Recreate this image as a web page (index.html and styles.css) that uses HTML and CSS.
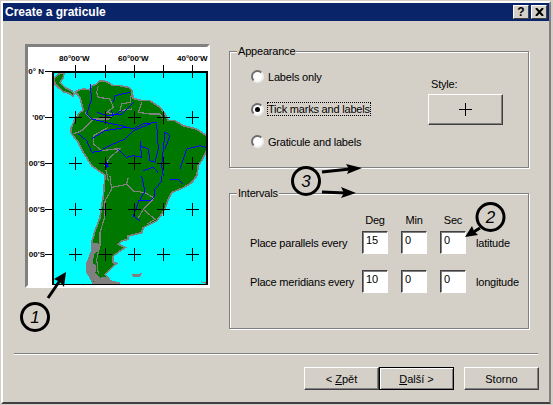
FILE: index.html
```html
<!DOCTYPE html>
<html lang="en">
<head>
    <meta charset="UTF-8">
    <title>Create a graticule</title>
    <link rel="stylesheet" href="styles.css">
</head>
<body>
<div class="window">
    <div class="titlebar">
        <span class="title">Create a graticule</span>
        <button class="caption-btn help-btn">?</button>
        <button class="caption-btn close-btn">
            <svg width="9" height="8" viewBox="0 0 9 8"><path d="M1 0L8 8M8 0L1 8" stroke="#000" stroke-width="2" fill="none"/></svg>
        </button>
    </div>

    <div class="dialog-body">
        <div class="preview">
            <svg class="map" width="180" height="238" viewBox="28 46 180 238">
                <defs>
                    <clipPath id="plotClip"><rect x="53" y="71" width="153" height="212"/></clipPath>
                </defs>

                <g class="labels">
                    <text x="59" y="60">80°00'W</text>
                    <text x="118" y="60">60°00'W</text>
                    <text x="177" y="60">40°00'W</text>
                    <text x="44" y="73" text-anchor="end">0° N</text>
                    <text x="45" y="119" text-anchor="end">'00'</text>
                    <text x="45" y="165" text-anchor="end">00'S</text>
                    <text x="45" y="211" text-anchor="end">00'S</text>
                    <text x="45" y="256" text-anchor="end">00'S</text>
                </g>

                <rect x="53" y="71" width="153" height="212" fill="#00ffff"/>

                <!-- traced from the picture at 3x, so scale back down -->
                <g clip-path="url(#plotClip)">
                    <g transform="translate(50 68) scale(0.3333)" fill="none" shape-rendering="crispEdges">
                        <path class="land" d="M12,28 L25,15 42,12 40,25 30,40 45,55 65,65 72,75 70,82 55,72 40,68 25,55 15,45 Z"/>
                        <path class="land" d="M75,68 L90,62 100,60 118,62 125,50 140,45 150,35 170,38 190,50 210,50 235,55 245,62 250,88 275,95 300,95 330,115 345,135 355,155 375,155 400,170 440,180 470,200 480,205 480,240 470,245 455,275 445,290 440,321 425,341 400,356 365,371 355,391 345,421 320,456 300,466 280,476 275,491 235,501 235,511 215,516 205,526 225,536 210,546 190,561 190,581 200,583 180,601 165,616 175,626 180,636 210,643 130,643 112,611 110,586 125,546 125,521 135,486 150,446 160,381 165,321 160,315 125,290 100,250 85,220 65,195 62,180 75,150 90,130 100,125 90,85 Z"/>
                        <path class="ice" d="M122,521 L148,524 145,546 132,556 128,583 140,590 136,611 150,626 170,624 185,641 135,643 115,615 110,586 122,550 Z"/>
                        <path class="ice" d="M245,616 L275,613 270,623 250,623 Z"/>
                        <path class="ice" d="M452,637 L470,641 470,644 460,643 Z"/>

                        <path class="border" d="M145,50 L140,70 145,85 180,90 190,115 170,130 190,135 175,150 130,150 95,185 70,195"/>
                        <path class="border" d="M245,70 L240,100 215,105 210,125 245,120"/>
                        <path class="border" d="M275,100 L265,130 300,135 330,135 340,150"/>
                        <path class="border" d="M105,130 L125,150"/>
                        <path class="border" d="M175,175 L130,200 130,225 155,245 195,240 210,240 180,265 165,290 175,335"/>
                        <path class="border" d="M180,321 L185,361 165,396 165,441 150,491 150,531 140,571 145,616"/>
                        <path class="border" d="M185,355 L230,346 250,366 285,371 310,386 305,396 280,421 315,451 290,466"/>
                        <path class="border" d="M235,326 L230,346"/>
                        <path class="border" d="M280,421 L265,446"/>

                        <path class="river" d="M190,100 L195,80 240,70"/>
                        <path class="river" d="M120,45 L125,90 110,135 125,150 165,160 215,170 250,180 280,165 320,160"/>
                        <path class="river" d="M85,195 L110,215 125,250 155,245"/>
                        <path class="river" d="M125,210 L165,185 230,175"/>
                        <path class="river" d="M160,240 L190,225 225,210 250,185 300,165"/>
                        <path class="river" d="M205,240 L230,265 250,260 275,265 270,215"/>
                        <path class="river" d="M270,230 L295,240 300,275 315,280 325,240 320,165"/>
                        <path class="river" d="M345,240 L360,200 345,190 335,290 340,321"/>
                        <path class="river" d="M390,300 L410,240 450,230 468,235"/>
                        <path class="river" d="M140,130 L170,140 215,135 250,100"/>
                        <path class="river" d="M185,125 L190,140 215,125"/>
                        <path class="river" d="M280,305 L310,295 325,312"/>
                        <path class="river" d="M275,321 L285,366 265,401 250,441 270,456"/>
                        <path class="river" d="M265,396 L300,396 315,381 315,361 335,336 335,321"/>
                        <path class="river" d="M360,331 L385,331 400,346"/>
                        <path class="lake" d="M165,280 L172,295"/>
                    </g>
                </g>

                <g class="ticks">
                    <path d="M75 64V77M105 64V77M134 64V77M163 64V77M192 64V77"/>
                    <path d="M45 70.5H53M45 116.5H53M45 162.5H53M45 208.5H53M45 253.5H53"/>
                    <path class="frame" d="M52.500 70.500H206.500V283.500H52.500Z"/>
                    <path d="M69 116.5H82M75.5 110V123M99 116.5H112M105.5 110V123M128 116.5H141M134.5 110V123M157 116.5H170M163.5 110V123M186 116.5H199M192.5 110V123"/>
                    <path d="M69 162.5H82M75.5 156V169M99 162.5H112M105.5 156V169M128 162.5H141M134.5 156V169M157 162.5H170M163.5 156V169M186 162.5H199M192.5 156V169"/>
                    <path d="M69 208.5H82M75.5 202V215M99 208.5H112M105.5 202V215M128 208.5H141M134.5 202V215M157 208.5H170M163.5 202V215M186 208.5H199M192.5 202V215"/>
                    <path d="M69 253.5H82M75.5 247V260M99 253.5H112M105.5 247V260M128 253.5H141M134.5 247V260M157 253.5H170M163.5 247V260M186 253.5H199M192.5 247V260"/>
                </g>
            </svg>
        </div>

        <div class="settings">
            <div class="group appearance">
                <span class="legend">Appearance</span>
                <div class="radios">
                    <label class="radio-row"><input type="radio" name="mode"><span>Labels only</span></label>
                    <label class="radio-row"><input type="radio" name="mode" checked><span class="focused">Tick marks and labels</span></label>
                    <label class="radio-row"><input type="radio" name="mode"><span>Graticule and labels</span></label>
                </div>
                <div class="style-box">
                    <div class="style-label">Style:</div>
                    <button class="btn style-btn">
                        <svg width="13" height="13" viewBox="0 0 13 13"><path d="M0 6.5H13M6.5 0V13" stroke="#000" fill="none"/></svg>
                    </button>
                </div>
            </div>

            <div class="group intervals">
                <span class="legend">Intervals</span>
                <div class="row head-row">
                    <span class="row-label"></span>
                    <span class="field head">Deg</span>
                    <span class="field head">Min</span>
                    <span class="field head">Sec</span>
                </div>
                <div class="row">
                    <span class="row-label">Place parallels every</span>
                    <input class="field" type="text" value="15">
                    <input class="field" type="text" value="0">
                    <input class="field" type="text" value="0">
                    <span class="unit">latitude</span>
                </div>
                <div class="row">
                    <span class="row-label">Place meridians every</span>
                    <input class="field" type="text" value="10">
                    <input class="field" type="text" value="0">
                    <input class="field" type="text" value="0">
                    <span class="unit">longitude</span>
                </div>
            </div>
        </div>
    </div>

    <div class="separator"></div>

    <div class="footer">
        <button class="btn nav-btn">&lt; <u>Z</u>pět</button>
        <button class="btn nav-btn default-btn"><u>D</u>alší &gt;</button>
        <button class="btn nav-btn cancel-btn">Storno</button>
    </div>
</div>

<!-- numbered callouts drawn on top of the dialog -->
<svg class="callouts" width="553" height="405" viewBox="0 0 553 405">
    <circle cx="35" cy="317" r="13.5"/>
    <text x="35" y="323">1</text>
    <path class="shaft" d="M48 298L61 279"/>
    <path class="arrowhead" d="M66 272L64 287L60 282L54 279Z"/>

    <circle cx="490.5" cy="217" r="13.5"/>
    <text x="490.5" y="223">2</text>
    <path class="shaft" d="M480 228L472 233"/>
    <path class="arrowhead" d="M465 237L472 226L474 231L478 235Z"/>

    <circle cx="306" cy="181" r="13.5"/>
    <text x="306" y="187">3</text>
    <path class="shaft" d="M322 172L350 169"/>
    <path class="arrowhead" d="M362 168L347 174L349 169L346 164Z"/>
    <path class="shaft" d="M322 192L345 193"/>
    <path class="arrowhead" d="M356 193L341 198L344 193L341 187Z"/>
</svg>
</body>
</html>
```

FILE: styles.css
```css
html, body {
    margin: 0;
    height: 405px;
    overflow: hidden;
    background-color: #d4d0c8;
}
body {
    position: relative;
    font-family: "Liberation Sans", Arial, sans-serif;
    font-size: 11px;
    letter-spacing: -0.2px;
    color: #000;
}
.window {
    box-sizing: border-box;
    width: 550px;
    height: 403px;
    margin: 1px 0 0 1px;
    border: 2px solid;
    border-color: #fff #808080 #404040 #fff;
}

/* title bar */
.titlebar {
    display: flex;
    align-items: center;
    height: 18px;
    padding: 0 2px;
    background-color: #0a246a;
}
.title {
    flex: 1;
    color: #fff;
    font-weight: bold;
    font-size: 12px;
    letter-spacing: 0;
}
.caption-btn {
    display: flex;
    align-items: center;
    justify-content: center;
    box-sizing: border-box;
    width: 16px;
    height: 14px;
    padding: 0;
    border: 1px solid;
    border-color: #fff #404040 #404040 #fff;
    background-color: #d4d0c8;
    font-family: "Liberation Sans", Arial, sans-serif;
    font-size: 12px;
    font-weight: bold;
}
.close-btn {
    margin-left: 2px;
}

.dialog-body {
    display: flex;
    padding-top: 23px;
}

/* map preview */
.preview {
    box-sizing: border-box;
    width: 185px;
    height: 244px;
    margin-left: 22px;
    border: 3px solid;
    border-color: #808080 #fff #fff #808080;
    background-color: #fff;
}
.map {
    display: block;
}
.labels text {
    font-family: "Liberation Sans", Arial, sans-serif;
    font-size: 8px;
    font-weight: bold;
    letter-spacing: 0;
}
.land {
    fill: #007800;
    stroke: #808080;
    stroke-width: 5;
}
.ice {
    fill: #808080;
}
.border {
    stroke: #808080;
    stroke-width: 3.5;
}
.river {
    stroke: #0000ff;
    stroke-width: 3;
}
.lake {
    stroke: #0000ff;
    stroke-width: 9;
}
.ticks path {
    fill: none;
    stroke: #000;
    shape-rendering: crispEdges;
}
.ticks .frame {
    stroke-width: 2;
}

/* group boxes */
.settings {
    display: flex;
    flex-direction: column;
    gap: 25px;
    width: 300px;
    margin: 7px 0 0 19px;
}
.group {
    position: relative;
    box-sizing: border-box;
    border: 1px solid #808080;
    box-shadow: 1px 1px 0 #fff, inset 1px 1px 0 #fff;
}
.legend {
    position: absolute;
    top: -7px;
    left: 7px;
    padding: 0 1px;
    background-color: #d4d0c8;
}
.appearance {
    display: flex;
    height: 117px;
}
.intervals {
    height: 136px;
    padding: 19px 0 0 20px;
}

.radios {
    display: flex;
    flex-direction: column;
    gap: 17.5px;
    width: 177px;
    padding: 17px 0 0 21px;
}
.radio-row {
    display: flex;
    align-items: center;
    gap: 3px;
    height: 15px;
}
.radio-row input {
    appearance: none;
    box-sizing: border-box;
    flex: none;
    position: relative;
    width: 13px;
    height: 13px;
    margin: 0;
    border-radius: 50%;
    border: 2px solid;
    border-color: #6e6e6e #eee #eee #6e6e6e;
    background-color: #fff;
}
.radio-row input:checked::after {
    content: "";
    position: absolute;
    left: 2px;
    top: 2px;
    width: 5px;
    height: 5px;
    border-radius: 50%;
    background-color: #000;
}
.radio-row span {
    border: 1px solid transparent;
}
.radio-row .focused {
    border: 1px dotted #000;
}

.style-box {
    padding-top: 26px;
}
.style-label {
    margin: 0 0 4px 3px;
}
.btn {
    box-sizing: border-box;
    padding: 0;
    border: 1px solid;
    border-color: #fff #404040 #404040 #fff;
    box-shadow: inset -1px -1px 0 #808080;
    background-color: #d4d0c8;
    font-family: "Liberation Sans", Arial, sans-serif;
    font-size: 11px;
    color: #000;
}
.style-btn {
    display: flex;
    align-items: center;
    justify-content: center;
    width: 75px;
    height: 31px;
}

.row {
    display: flex;
    align-items: center;
    height: 23px;
    margin-bottom: 16px;
}
.head-row {
    height: 14px;
    margin-bottom: 4px;
}
.row-label {
    width: 112px;
    flex: none;
}
.field {
    box-sizing: border-box;
    flex: none;
    width: 26px;
    height: 23px;
    margin: 0 13px 0 0;
    padding: 0 0 5px 3px;
    border: 1px solid;
    border-color: #404040 #fff #fff #404040;
    box-shadow: inset 1px 1px 0 #808080;
    background-color: #fff;
    font-family: "Liberation Sans", Arial, sans-serif;
    font-size: 11px;
    color: #000;
}
.field.head {
    height: auto;
    padding: 0;
    border: none;
    box-shadow: none;
    background: none;
    text-align: center;
}
.unit {
    margin-left: -3px;
}

/* bottom of the dialog */
.separator {
    height: 1px;
    margin: 24px 11px 0 11px;
    background-color: #808080;
    box-shadow: 0 1px 0 #fff;
}
.footer {
    display: flex;
    justify-content: flex-end;
    margin: 13px 10px 0 0;
}
.nav-btn {
    width: 75px;
    height: 23px;
}
.default-btn {
    outline: 1px solid #000;
    outline-offset: -1px;
    border-color: #000;
    box-shadow: inset 1px 1px 0 #fff, inset -1px -1px 0 #808080;
}
.cancel-btn {
    margin-left: 10px;
}

/* callouts */
.callouts {
    position: absolute;
    left: 0;
    top: 0;
    pointer-events: none;
}
.callouts circle {
    fill: #d4d0c8;
    stroke: #000;
    stroke-width: 3;
}
.callouts .shaft {
    fill: none;
    stroke: #000;
    stroke-width: 3;
}
.callouts .arrowhead {
    fill: #000;
}
.callouts text {
    font-family: "Liberation Sans", Arial, sans-serif;
    font-size: 17px;
    font-style: italic;
    letter-spacing: 0;
    text-anchor: middle;
}
```
